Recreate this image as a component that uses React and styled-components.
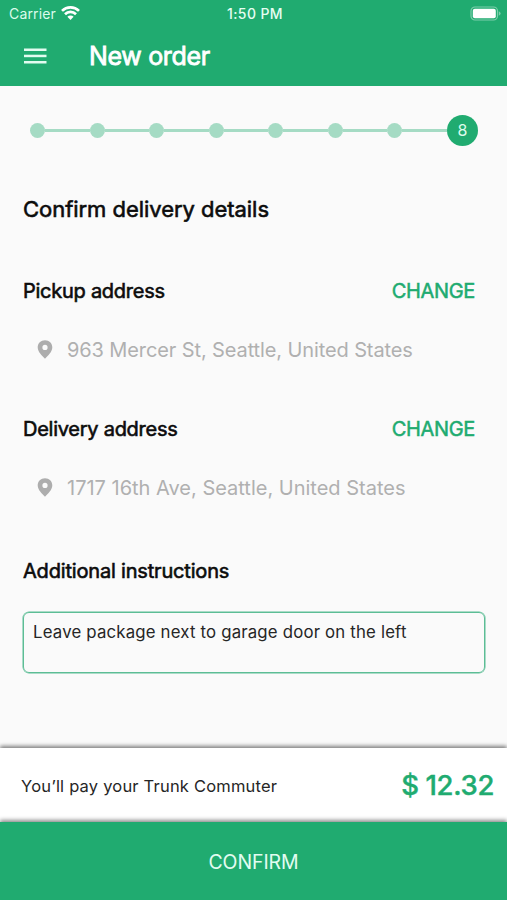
import React from 'react'
import styled, { createGlobalStyle } from 'styled-components'

const green = '#20ab70'
const paleGreen = '#a5dbc4'
const standardFont = 'Inter, "Liberation Sans", sans-serif'

const GlobalStyle = createGlobalStyle`
  * {
    box-sizing: border-box;
  }

  body {
    margin: 0;
    background-color: #fafafa;
    font-family: ${standardFont};
  }
`

const Screen = styled.div`
  width: 100%;
  height: 900px;
  display: flex;
  flex-flow: column nowrap;
  overflow: hidden;
  background-color: #fafafa;
`

const Header = styled.header`
  flex: 0 0 auto;
  height: 86px;
  background-color: ${green};
  color: #ffffff;
`

const StatusBar = styled.div`
  height: 28px;
  padding: 0 6px 0 9px;
  display: grid;
  grid-template-columns: 1fr auto 1fr;
  align-items: center;
  font-size: 14px;
  line-height: 28px;
`

const Carrier = styled.div`
  display: flex;
  align-items: center;
  gap: 6px;
  letter-spacing: 0.15px;
  color: #dcfbec;
`

const Clock = styled.div`
  font-weight: 500;
  letter-spacing: 0.4px;
  color: #e6fdf2;
`

const WifiIcon = styled.svg`
  margin: -2px 0 0 -0.5px;
`

const BatteryIcon = styled.svg`
  justify-self: end;
  margin-top: -1px;
`

const TitleBar = styled.div`
  height: 55px;
  padding-left: 24px;
  display: flex;
  align-items: center;
  gap: 42px;
`

const PageTitle = styled.h1`
  margin: 0;
  font-size: 25px;
  font-weight: 400;
  line-height: 32px;
  letter-spacing: -0.33px;
  -webkit-text-stroke: 0.8px currentColor;
`

const Content = styled.main`
  flex: 1 1 auto;
  padding: 0 22px 0 23px;
`

const Stepper = styled.div`
  height: 31px;
  margin: 29px 7px 0;
  display: flex;
  align-items: center;
`

const StepDot = styled.div`
  width: 15px;
  height: 15px;
  flex: 0 0 auto;
  border-radius: 50%;
  background-color: ${paleGreen};
`

const StepLine = styled.div`
  height: 3px;
  flex: 1 1 0;
  background-color: ${paleGreen};
`

const CurrentStep = styled.div`
  width: 31px;
  height: 31px;
  flex: 0 0 auto;
  border-radius: 50%;
  background-color: ${green};
  color: #dcfbec;
  font-size: 16px;
  line-height: 31px;
  text-align: center;
`

const Heading = styled.h2`
  margin: 48px 0 0;
  font-size: 22px;
  font-weight: 400;
  line-height: 30px;
  letter-spacing: -0.04px;
  color: #0c0c0c;
  -webkit-text-stroke: 0.6px currentColor;
`

const Section = styled.section`
  margin-top: ${props => props.$top}px;
`

const SectionHeader = styled.div`
  padding-right: 10px;
  display: flex;
  align-items: center;
  justify-content: space-between;
`

const SectionTitle = styled.h3`
  margin: 0;
  font-size: 20px;
  font-weight: 400;
  line-height: 28px;
  letter-spacing: ${props => props.$spacing || 0}px;
  color: #0c0c0c;
  -webkit-text-stroke: 0.6px currentColor;
`

const ChangeButton = styled.button`
  padding: 0;
  border: 0;
  background: none;
  font-family: inherit;
  font-size: 20px;
  line-height: 28px;
  letter-spacing: -0.35px;
  color: ${green};
  -webkit-text-stroke: 0.5px currentColor;
`

const AddressRow = styled.div`
  margin-top: 31px;
  padding-left: 14px;
  display: flex;
  align-items: center;
  gap: 14px;
  font-size: 20px;
  line-height: 29px;
  letter-spacing: ${props => props.$spacing || 0}px;
  color: #b0b0b0;
`

const PinIcon = styled.svg`
  margin-top: -3px;
`

const Instructions = styled.textarea`
  display: block;
  width: 100%;
  height: 61px;
  margin: 27px 0 0;
  padding: 8px 9px;
  resize: none;
  outline: none;
  overflow: hidden;
  border: 1px solid #5cbd95;
  border-radius: 6px;
  box-shadow: 0 0 0 0.5px #5cbd95;
  background-color: transparent;
  font-family: inherit;
  font-size: 16.8px;
  line-height: 22px;
  letter-spacing: 0.18px;
  color: #262626;
`

const PaymentBar = styled.div`
  height: 74px;
  flex: 0 0 auto;
  padding: 0 13px 0 21px;
  display: flex;
  align-items: center;
  justify-content: space-between;
  background-color: #ffffff;
  box-shadow: 0 -2px 4px rgba(0, 0, 0, 0.5);
  z-index: 1;
`

const PaymentLabel = styled.span`
  padding-top: 2px;
  font-size: 16.5px;
  line-height: 24px;
  letter-spacing: 0.2px;
  color: #262626;
`

const Price = styled.span`
  font-size: 27.5px;
  font-weight: 500;
  line-height: 36px;
  letter-spacing: -0.35px;
  color: ${green};
  -webkit-text-stroke: 0.4px currentColor;
`

const ConfirmButton = styled.button`
  height: 78px;
  flex: 0 0 auto;
  padding: 1px 0 0;
  border: 0;
  background-color: ${green};
  box-shadow: 0 -2px 4px rgba(0, 0, 0, 0.45);
  z-index: 2;
  font-family: inherit;
  font-size: 19.5px;
  letter-spacing: -0.1px;
  color: #e2fcf0;
`

const Wifi = () =>
  <WifiIcon width="19" height="14" viewBox="0 0 19 14" fill="none" stroke="#ffffff" strokeWidth="2.7">
    <path d="M1 4.9 A12.2 12.2 0 0 1 18 4.9" />
    <path d="M4 8.2 A7.9 7.9 0 0 1 15 8.2" />
    <path d="M9.5 14 L6.4 10.8 A4.4 4.4 0 0 1 12.6 10.8 Z" fill="#ffffff" stroke="none" />
  </WifiIcon>

const Battery = () =>
  <BatteryIcon width="31" height="15" viewBox="0 0 31 15">
    <rect x="1" y="1" width="26.5" height="13" rx="4" fill="none" stroke="#7dceab" strokeWidth="1.2" />
    <rect x="2.8" y="2.8" width="23" height="9.4" rx="2" fill="#ffffff" />
    <path d="M28.8 5.2 Q30.6 6 30.6 7.5 Q30.6 9 28.8 9.8 Z" fill="#7dceab" />
  </BatteryIcon>

const Menu = () =>
  <svg width="23" height="16" viewBox="0 0 23 16" fill="#e2fcf0">
    <rect y="0.5" width="22.5" height="2.5" />
    <rect y="6.7" width="22.5" height="2.5" />
    <rect y="13" width="22.5" height="2.5" />
  </svg>

const Pin = () =>
  <PinIcon width="16" height="19" viewBox="0 0 16 19" fill="#adadad">
    <path
      fillRule="evenodd"
      d="M8 0.2 C3.8 0.2 0.7 3.3 0.7 7.3 C0.7 12 5 15.7 8 18.8 C11 15.7 15.3 12 15.3 7.3 C15.3 3.3 12.2 0.2 8 0.2 Z M8 4.8 A2.6 2.6 0 1 1 8 10 A2.6 2.6 0 1 1 8 4.8 Z"
    />
  </PinIcon>

const Address = ({ title, address, top, spacing }) =>
  <Section $top={top}>
    <SectionHeader>
      <SectionTitle $spacing={-0.26}>{title}</SectionTitle>
      <ChangeButton>CHANGE</ChangeButton>
    </SectionHeader>
    <AddressRow $spacing={spacing}>
      <Pin />
      <span>{address}</span>
    </AddressRow>
  </Section>

const steps = [1, 2, 3, 4, 5, 6, 7]

export default function App() {
  return (
    <Screen>
      <GlobalStyle />
      <Header>
        <StatusBar>
          <Carrier>Carrier <Wifi /></Carrier>
          <Clock>1:50 PM</Clock>
          <Battery />
        </StatusBar>
        <TitleBar>
          <Menu />
          <PageTitle>New order</PageTitle>
        </TitleBar>
      </Header>
      <Content>
        <Stepper>
          {steps.map(step =>
            <React.Fragment key={step}>
              <StepDot />
              <StepLine />
            </React.Fragment>
          )}
          <CurrentStep>8</CurrentStep>
        </Stepper>
        <Heading>Confirm delivery details</Heading>
        <Address title="Pickup address" address="963 Mercer St, Seattle, United States" top={53} spacing={-0.11} />
        <Address title="Delivery address" address="1717 16th Ave, Seattle, United States" top={50} />
        <Section $top={54}>
          <SectionTitle $spacing={-0.18}>Additional instructions</SectionTitle>
          <Instructions defaultValue="Leave package next to garage door on the left" />
        </Section>
      </Content>
      <PaymentBar>
        <PaymentLabel>You’ll pay your Trunk Commuter</PaymentLabel>
        <Price>$ 12.32</Price>
      </PaymentBar>
      <ConfirmButton>CONFIRM</ConfirmButton>
    </Screen>
  )
}
